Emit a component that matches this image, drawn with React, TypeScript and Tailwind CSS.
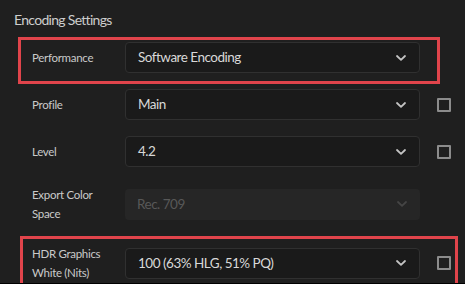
import { ReactNode } from "react";

type SelectProps = {
    value: string;
    disabled?: boolean;
};

const Chevron = ({ disabled }: { disabled?: boolean }) => (
    <svg
        width="10"
        height="6"
        viewBox="0 0 10 6"
        className={disabled ? "text-[#454545]" : "text-[#c4c4c4]"}
    >
        <path
            d="M1 1 L5 4.8 L9 1"
            fill="none"
            stroke="currentColor"
            strokeWidth="1.8"
            strokeLinecap="round"
            strokeLinejoin="round"
        />
    </svg>
);

const Select = ({ value, disabled }: SelectProps) => (
    <div
        className={`flex h-[31px] w-[295px] shrink-0 items-center justify-between rounded-[4px] pl-[12px] pr-[13px] text-[13.5px] tracking-[-0.5px] ${
            disabled
                ? "bg-[#262626] text-[#585858]"
                : "border border-[#303030] bg-[#1a1a1a] text-[#d8d8d8]"
        }`}
    >
        <span>{value}</span>
        <Chevron disabled={disabled} />
    </div>
);

const Checkbox = () => (
    <div className="ml-[17px] h-[14px] w-[14px] rounded-[1px] border-2 border-[#8c8c8c]" />
);

type RowProps = {
    label: ReactNode;
    value: string;
    disabled?: boolean;
    checkbox?: boolean;
};

const Row = ({ label, value, disabled, checkbox }: RowProps) => (
    <div className="flex items-center">
        <div className="w-[93px] shrink-0 text-[11.5px] leading-[19px] tracking-[-0.3px] text-[#cacaca]">
            {label}
        </div>
        <Select value={value} disabled={disabled} />
        {checkbox && <Checkbox />}
    </div>
);

export default function App() {
    return (
        <div
            className="h-[284px] w-[465px] overflow-hidden border-b border-black bg-[#1f1f1f]"
            style={{ fontFamily: "Lato, 'Open Sans', sans-serif" }}
        >
            <div className="h-[37px] pl-[14px] pt-[11px] text-[14px] leading-[18px] tracking-[-0.7px] text-[#cdcdcd]">
                Encoding Settings
            </div>

            <div className="ml-[18px] h-[47px] w-[422px] border-[3px] border-[#e0444b] pl-[11px] pt-[2px]">
                <Row label="Performance" value="Software Encoding" />
            </div>

            <div className="mt-[5px] pl-[32px]">
                <Row label="Profile" value="Main" checkbox />
            </div>

            <div className="mt-[16px] pl-[32px]">
                <Row label="Level" value="4.2" checkbox />
            </div>

            <div className="mt-[18px] pl-[32px]">
                <Row
                    label={
                        <>
                            Export Color
                            <br />
                            Space
                        </>
                    }
                    value="Rec. 709"
                    disabled
                />
            </div>

            <div className="ml-[20px] mt-[13px] h-[51px] w-[438px] border-[3px] border-[#e0444b] pl-[9px] pt-[5px]">
                <Row
                    label={
                        <>
                            HDR Graphics
                            <br />
                            White (Nits)
                        </>
                    }
                    value="100 (63% HLG, 51% PQ)"
                    checkbox
                />
            </div>
        </div>
    );
}
